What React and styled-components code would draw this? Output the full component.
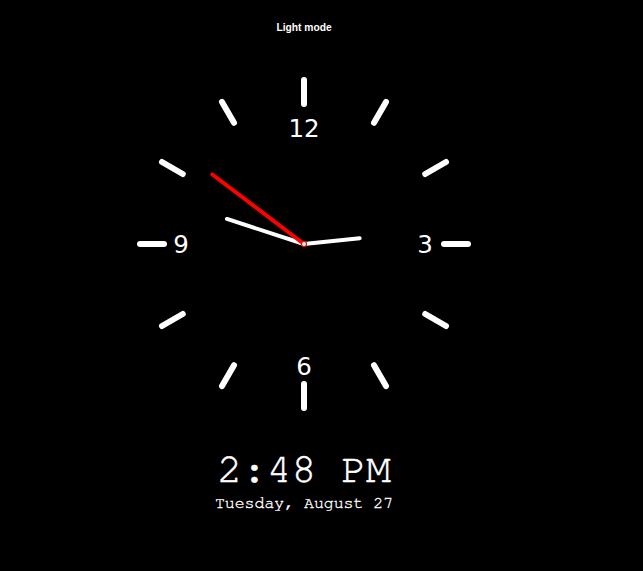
import React from 'react';
import styled, { createGlobalStyle } from 'styled-components';

const GlobalStyle = createGlobalStyle`
    html, body {
        margin: 0;
        padding: 0;
        background: #000000;
    }
`;

const Page = styled.div`
    width: 608px;
    min-height: 571px;
    display: flex;
    flex-direction: column;
    align-items: center;
    background: #000000;
    padding-top: 17px;
    box-sizing: border-box;
`;

const ModeButton = styled.button`
    background: transparent;
    border: none;
    color: #ffffff;
    font-family: "Liberation Sans", Arial, sans-serif;
    font-weight: bold;
    font-size: 10.25px;
    height: 20px;
    padding: 0 6px;
    cursor: pointer;
`;

const Face = styled.svg`
    display: block;
    margin-top: 37px;
`;

const mono = `"Nimbus Mono PS", "Nimbus Mono L", FreeMono, "Courier 10 Pitch", "Liberation Mono", monospace`;

const Time = styled.div`
    margin-top: 32px;
    font-family: ${mono};
    font-size: 41.3px;
    line-height: 48px;
    color: #ffffff;
    -webkit-text-stroke: 0.5px #ffffff;
`;

const DateLine = styled.div`
    font-family: ${mono};
    font-size: 16.5px;
    line-height: 19px;
    color: #ffffff;
    -webkit-text-stroke: 0.35px #ffffff;
`;

const C = 170;

const polar = (angle, r) => {
    const rad = (angle * Math.PI) / 180;
    return [C + r * Math.sin(rad), C - r * Math.cos(rad)];
};

function Clock({ hours, minutes, seconds }) {
    const ticks = Array.from({ length: 12 }, (_, i) => i * 30);
    const numbers = [
        { n: 12, a: 0, r: 116 },
        { n: 3, a: 90, r: 121 },
        { n: 6, a: 180, r: 122 },
        { n: 9, a: 270, r: 123 },
    ];
    const hourAngle = (hours % 12) * 30 + minutes * 0.5;
    const minuteAngle = minutes * 6;
    const secondAngle = seconds * 6;
    const hand = (angle, len, color) => {
        const [x, y] = polar(angle, len);
        return <line x1={C} y1={C} x2={x} y2={y} stroke={color} strokeWidth="4" strokeLinecap="round" />;
    };

    return (
        <Face width="340" height="340" viewBox="0 0 340 340">
            {ticks.map((a) => {
                const [x1, y1] = polar(a, 140);
                const [x2, y2] = polar(a, 164);
                return <line key={a} x1={x1} y1={y1} x2={x2} y2={y2} stroke="#fff" strokeWidth="6" strokeLinecap="round" />;
            })}
            {numbers.map(({ n, a, r }) => {
                const [x, y] = polar(a, r);
                return (
                    <text key={n} x={x} y={y + 9} fill="#fff" fontSize="24.5" textAnchor="middle" fontFamily="'DejaVu Sans', sans-serif">
                        {n}
                    </text>
                );
            })}
            {hand(hourAngle, 56, '#fff')}
            {hand(minuteAngle, 81, '#fff')}
            {hand(secondAngle, 115, '#ff0000')}
            <circle cx={C} cy={C} r="2.5" fill="#fff" stroke="#ff0000" strokeWidth="1.2" />
        </Face>
    );
}

export default function App() {
    return (
        <>
            <GlobalStyle />
            <Page>
                <ModeButton>Light mode</ModeButton>
                <Clock hours={14} minutes={48} seconds={51.2} />
                <Time>2:48 PM</Time>
                <DateLine>Tuesday, August 27</DateLine>
            </Page>
        </>
    );
}
